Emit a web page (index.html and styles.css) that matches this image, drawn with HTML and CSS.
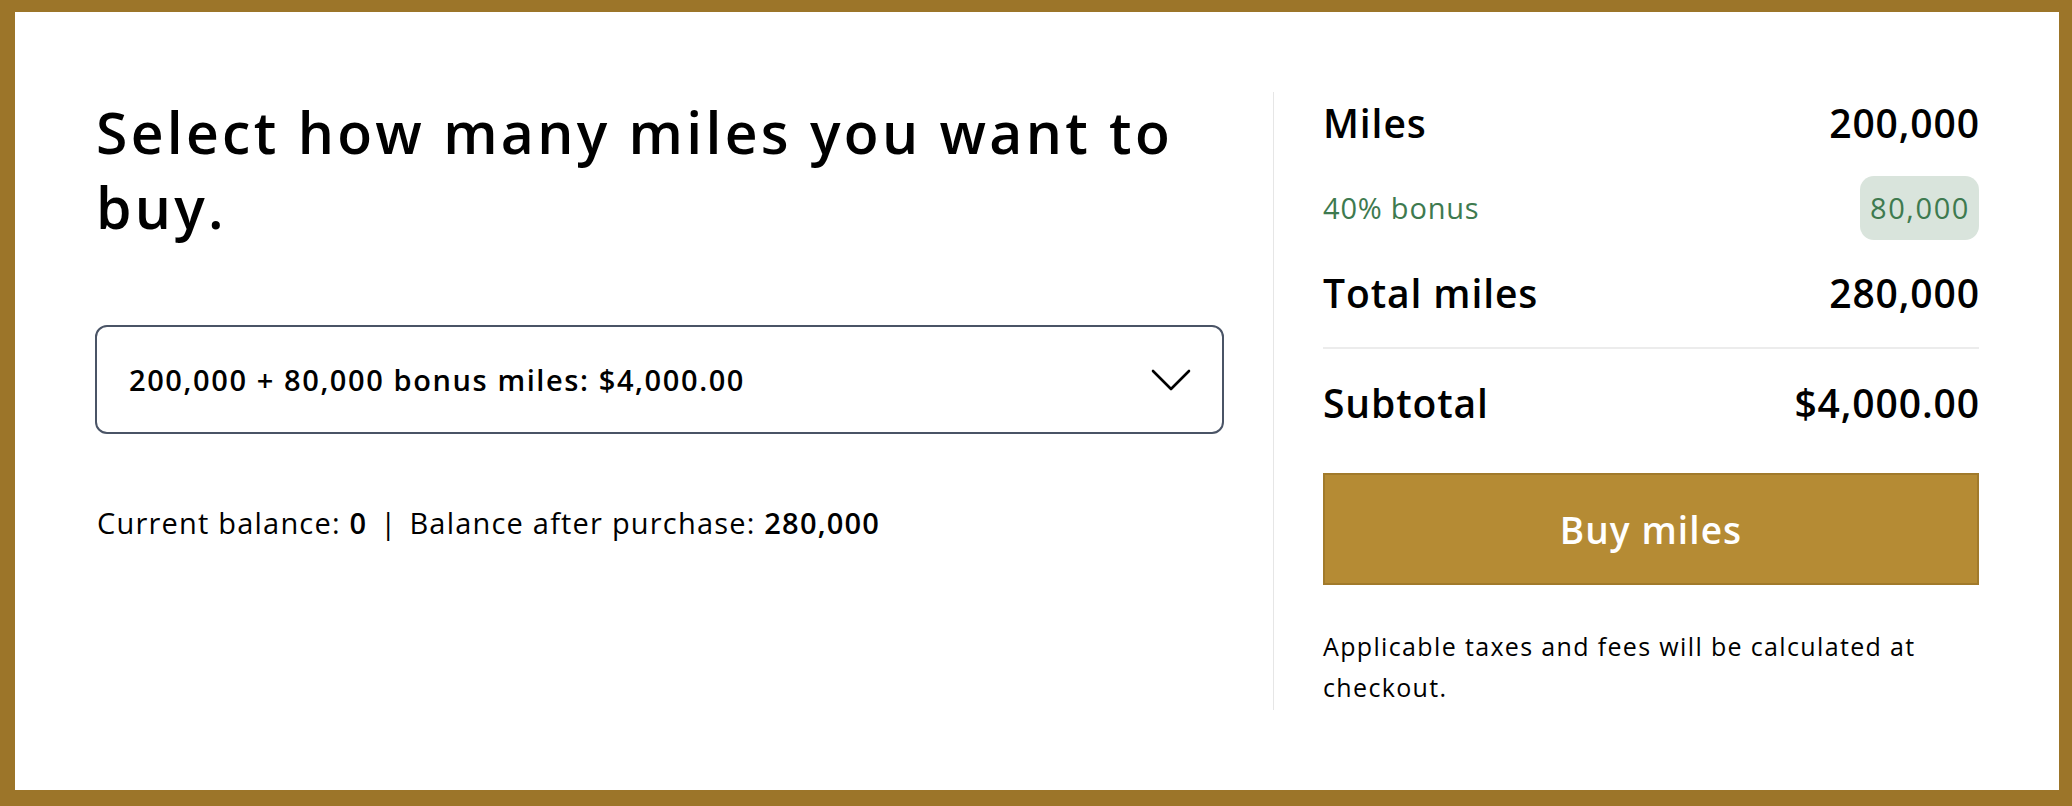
FILE: index.html
```html
<!DOCTYPE html>
<html lang="en">
<head>
<meta charset="utf-8">
<title>Buy miles</title>
<link rel="stylesheet" href="styles.css">
</head>
<body>
<div class="panel">
  <section class="left">
    <h1 class="title">Select how many miles you want to buy.</h1>
    <div class="select" role="combobox" aria-expanded="false">
      <span class="select-text">200,000 + 80,000 bonus miles: $4,000.00</span>
      <svg class="chevron" width="40" height="22" viewBox="0 0 40 22" aria-hidden="true">
        <polyline points="2,2 20,20 38,2" fill="none" stroke="#000" stroke-width="2.6" stroke-linecap="round" stroke-linejoin="round"/>
      </svg>
    </div>
    <p class="balance">Current balance: <b>0</b><span class="sep">|</span>Balance after purchase: <b>280,000</b></p>
  </section>
  <aside class="right">
    <div class="row row-main">
      <span>Miles</span><span class="val">200,000</span>
    </div>
    <div class="row row-bonus">
      <span>40% bonus</span><span class="badge">80,000</span>
    </div>
    <div class="row row-main row-total">
      <span>Total miles</span><span class="val">280,000</span>
    </div>
    <div class="rule"></div>
    <div class="row row-main row-sub">
      <span>Subtotal</span><span class="val">$4,000.00</span>
    </div>
    <button class="buy" type="button">Buy miles</button>
    <p class="note">Applicable taxes and fees will be calculated at checkout.</p>
  </aside>
</div>
</body>
</html>
```

FILE: styles.css
```css
* { box-sizing: border-box; }

html, body {
  margin: 0;
  padding: 0;
}

body {
  background: #9c7529;
  width: 2072px;
  height: 806px;
  overflow: hidden;
  padding: 12px 13px 16px 15px;
  font-family: "Open Sans", "Noto Sans", "Liberation Sans", sans-serif;
  color: #000;
}

.panel {
  background: #fff;
  height: 778px;
  padding: 80px;
  display: grid;
  grid-template-columns: 1129px 1fr;
  column-gap: 49px;
}

.left {
  display: flex;
  flex-direction: column;
}

.title {
  margin: 3px 0 0 0;
  font-size: 57px;
  line-height: 75px;
  font-weight: 600;
  letter-spacing: 3.3px;
  padding-left: 1px;
}

.select {
  margin-top: 80px;
  height: 109px;
  border: 2px solid #4a5466;
  border-radius: 12px;
  display: flex;
  align-items: center;
  justify-content: space-between;
  padding: 0 31px 0 32px;
}

.select-text {
  font-size: 29px;
  font-weight: 600;
  letter-spacing: 1.6px;
}

.chevron {
  display: block;
}

.balance {
  margin: 71px 0 0 0;
  padding-left: 2px;
  font-size: 29px;
  line-height: 36px;
  letter-spacing: 1.2px;
}

.balance b {
  font-weight: 600;
}

.sep {
  margin: 0 12px 0 13px;
}

.right {
  border-left: 1px solid #e6e6e6;
  padding-left: 49px;
  display: flex;
  flex-direction: column;
}

.row {
  display: flex;
  justify-content: space-between;
  align-items: center;
}

.row-main {
  font-size: 39px;
  font-weight: 600;
  line-height: 61px;
  letter-spacing: 0.9px;
}

.val {
  margin-right: -0.9px;
}

.row-bonus {
  margin-top: 23px;
  color: #3e7a4f;
  font-size: 29px;
  line-height: 40px;
  letter-spacing: 0.8px;
}

.badge {
  background: #d9e4dc;
  border-radius: 14px;
  height: 64px;
  display: flex;
  align-items: center;
  padding: 0 9px 0 10px;
  letter-spacing: 1.6px;
  font-weight: 500;
}

.row-total {
  margin-top: 22px;
}

.rule {
  margin-top: 24px;
  height: 2px;
  background: #ececec;
}

.row-sub {
  margin-top: 23px;
}

.buy {
  margin-top: 40px;
  height: 112px;
  width: 100%;
  background: #b58b34;
  border: 2px solid #a17a2b;
  color: #fff;
  font-family: inherit;
  font-size: 37px;
  font-weight: 600;
  letter-spacing: 1.1px;
  cursor: pointer;
}

.note {
  margin: 41px 0 0 0;
  font-size: 25px;
  line-height: 41px;
  letter-spacing: 1.35px;
}
```
